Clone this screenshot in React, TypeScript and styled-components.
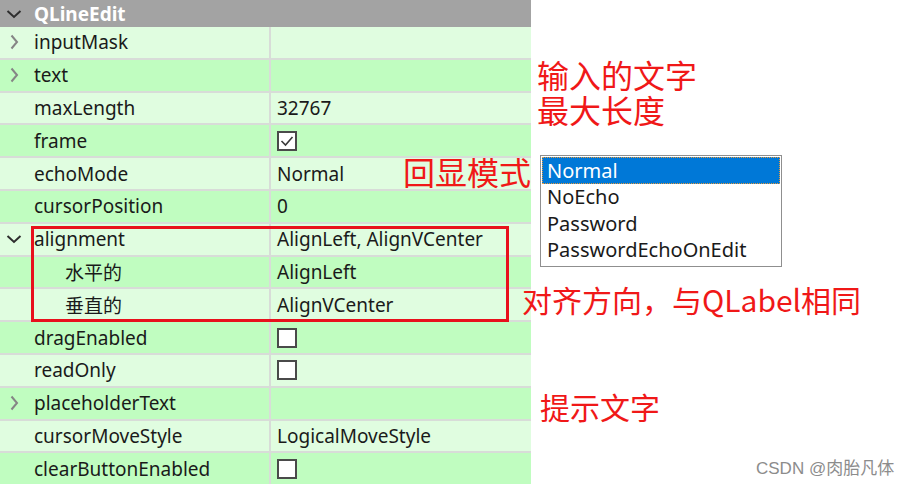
import styled, { createGlobalStyle } from 'styled-components'

const GlobalStyle = createGlobalStyle`
  html, body {
    margin: 0;
    padding: 0;
    background: #ffffff;
  }
  body {
    font-family: 'Noto Sans', 'Noto Sans CJK SC', sans-serif;
  }
`

type Row = {
  name: string
  value?: string
  check?: boolean
  arrow?: 'right' | 'down'
  sub?: boolean
}

const rows: Row[] = [
  { name: 'inputMask', arrow: 'right' },
  { name: 'text', arrow: 'right' },
  { name: 'maxLength', value: '32767' },
  { name: 'frame', check: true },
  { name: 'echoMode', value: 'Normal' },
  { name: 'cursorPosition', value: '0' },
  { name: 'alignment', value: 'AlignLeft, AlignVCenter', arrow: 'down' },
  { name: '水平的', value: 'AlignLeft', sub: true },
  { name: '垂直的', value: 'AlignVCenter', sub: true },
  { name: 'dragEnabled', check: false },
  { name: 'readOnly', check: false },
  { name: 'placeholderText', arrow: 'right' },
  { name: 'cursorMoveStyle', value: 'LogicalMoveStyle' },
  { name: 'clearButtonEnabled', check: false },
]

// red annotations drawn over the screenshot
const notes = [
  { text: '输入的文字', x: 537, y: 58, size: 32 },
  { text: '最大长度', x: 537, y: 93, size: 32 },
  { text: '回显模式', x: 403, y: 155, size: 32 },
  { text: '对齐方向，与QLabel相同', x: 522, y: 284, size: 30 },
  { text: '提示文字', x: 540, y: 391, size: 30 },
]

const echoModes = ['Normal', 'NoEcho', 'Password', 'PasswordEchoOnEdit']

const Chevron = ({ dir, dark }: { dir: 'right' | 'down'; dark?: boolean }) => (
  <svg width="16" height="16" viewBox="0 0 16 16">
    <path
      d={dir === 'right' ? 'M5.5 1.5 L11 8 L5.5 14.5' : 'M1.5 5 L8 11 L14.5 5'}
      fill="none"
      stroke={dark ? '#2e2e2e' : '#858585'}
      strokeWidth="2"
    />
  </svg>
)

const App = () => {
  return (
    <Page>
      <GlobalStyle />
      <Editor>
        <Header>
          <ArrowCell>
            <Chevron dir="down" dark />
          </ArrowCell>
          <HeaderTitle>QLineEdit</HeaderTitle>
        </Header>
        {rows.map((r, i) => (
          <PropRow key={r.name} $alt={i % 2 === 1}>
            <NameCell>
              <ArrowCell>{r.arrow && <Chevron dir={r.arrow} dark={r.arrow === 'down'} />}</ArrowCell>
              <NameText $sub={r.sub}>{r.name}</NameText>
            </NameCell>
            <ValueCell>
              {r.value}
              {r.check !== undefined && (
                <CheckBox>
                  {r.check && (
                    <svg width="16" height="16" viewBox="0 0 16 16">
                      <path d="M2.5 8 L6.5 12 L13.5 4" fill="none" stroke="#3a3a3a" strokeWidth="1.6" />
                    </svg>
                  )}
                </CheckBox>
              )}
            </ValueCell>
          </PropRow>
        ))}
      </Editor>

      <GroupFrame />

      {notes.map((n) => (
        <Note key={n.text} $x={n.x} $y={n.y} $size={n.size}>
          {n.text}
        </Note>
      ))}

      <DropList>
        {echoModes.map((m, i) => (
          <DropItem key={m} $active={i === 0}>
            {m}
          </DropItem>
        ))}
      </DropList>

      <Watermark>CSDN @肉胎凡体</Watermark>
    </Page>
  )
}

export default App

const Page = styled.div`
  position: relative;
  width: 908px;
  height: 484px;
  overflow: hidden;
  background: #ffffff;
`

const Editor = styled.div`
  width: 531px;
  display: flex;
  flex-direction: column;
`

const Header = styled.div`
  height: 27px;
  flex: none;
  display: flex;
  align-items: center;
  background: #a3a3a3;
`

const HeaderTitle = styled.span`
  color: #ffffff;
  font-size: 19px;
  font-weight: 700;
`

const ArrowCell = styled.span`
  width: 34px;
  flex: none;
  display: flex;
  align-items: center;
  padding-left: 6px;
  box-sizing: border-box;
`

const PropRow = styled.div<{ $alt: boolean }>`
  height: 32.8px;
  flex: none;
  box-sizing: border-box;
  display: flex;
  background: ${(p) => (p.$alt ? '#c0fdc0' : '#e0fde0')};
  border-bottom: 2px solid #d8dcd8;
`

const NameCell = styled.div`
  width: 271px;
  flex: none;
  display: flex;
  align-items: center;
  box-sizing: border-box;
  border-right: 2px solid #d8dcd8;
`

const NameText = styled.span<{ $sub?: boolean }>`
  font-size: 19px;
  color: #1a1a1a;
  padding-left: ${(p) => (p.$sub ? '31px' : '0')};
`

const ValueCell = styled.div`
  flex: 1;
  display: flex;
  align-items: center;
  padding-left: 6px;
  font-size: 19px;
  color: #1a1a1a;
`

const CheckBox = styled.span`
  width: 20px;
  height: 20px;
  box-sizing: border-box;
  border: 2px solid #4a4a4a;
  background: #ffffff;
  display: flex;
  align-items: center;
  justify-content: center;
`

const GroupFrame = styled.div`
  position: absolute;
  left: 31px;
  top: 226px;
  width: 478px;
  height: 96px;
  box-sizing: border-box;
  border: 3px solid #e8101c;
`

const Note = styled.div<{ $x: number; $y: number; $size: number }>`
  position: absolute;
  left: ${(p) => p.$x}px;
  top: ${(p) => p.$y}px;
  font-family: 'Noto Sans CJK SC', 'Noto Sans', sans-serif;
  font-size: ${(p) => p.$size}px;
  line-height: ${(p) => p.$size}px;
  color: #f01818;
  white-space: nowrap;
`

const DropList = styled.div`
  position: absolute;
  left: 540px;
  top: 155px;
  width: 242px;
  height: 112px;
  box-sizing: border-box;
  border: 1px solid #8f8f8f;
  background: #ffffff;
  padding: 1px;
`

const DropItem = styled.div<{ $active: boolean }>`
  height: 26.5px;
  display: flex;
  align-items: center;
  padding-left: 5px;
  font-size: 20px;
  color: ${(p) => (p.$active ? '#ffffff' : '#1a1a1a')};
  background: ${(p) => (p.$active ? '#0078d7' : 'transparent')};
  outline: ${(p) => (p.$active ? '1px dotted #e59a3c' : 'none')};
  outline-offset: -1px;
`

const Watermark = styled.div`
  position: absolute;
  left: 756px;
  top: 454px;
  font-family: 'Liberation Sans', 'Noto Sans CJK SC', sans-serif;
  font-size: 17px;
  color: #8c8c8c;
  white-space: nowrap;
`
